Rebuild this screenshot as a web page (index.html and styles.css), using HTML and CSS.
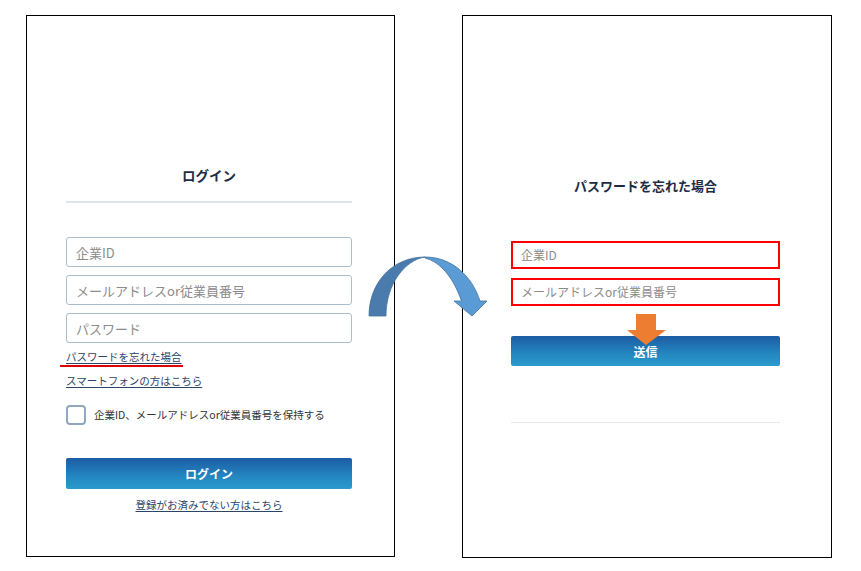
FILE: index.html
```html
<!DOCTYPE html>
<html lang="ja">
<head>
<meta charset="utf-8">
<title>ログイン</title>
<link rel="stylesheet" href="styles.css">
</head>
<body>
<div class="stage">
  <section class="panel panel-login">
    <h1 class="title">ログイン</h1>
    <div class="divider"></div>
    <input class="field" type="text" placeholder="企業ID">
    <input class="field" type="text" placeholder="メールアドレスor従業員番号">
    <input class="field" type="password" placeholder="パスワード">
    <div class="link-row first"><a class="link marked" href="#">パスワードを忘れた場合</a></div>
    <div class="link-row second"><a class="link" href="#">スマートフォンの方はこちら</a></div>
    <label class="keep">
      <span class="checkbox"></span>
      <span class="keep-text">企業ID、メールアドレスor従業員番号を保持する</span>
    </label>
    <button class="btn btn-login" type="button">ログイン</button>
    <div class="register"><a class="link" href="#">登録がお済みでない方はこちら</a></div>
  </section>

  <section class="panel panel-forgot">
    <h2 class="title small">パスワードを忘れた場合</h2>
    <input class="field red first" type="text" placeholder="企業ID">
    <input class="field red" type="text" placeholder="メールアドレスor従業員番号">
    <div class="send-wrap">
      <svg class="down-arrow" width="40" height="32" viewBox="0 0 40 32"><polygon points="9,0 29,0 29,16 39,16 19,31 0,16 9,16" fill="#ed7d31"/></svg>
      <button class="btn btn-send" type="button">送信</button>
    </div>
    <div class="divider light"></div>
  </section>

  <svg class="curve-arrow" width="130" height="70" viewBox="365 252 130 70">
    <path d="M369,316 C369,282 393,257 425,257 C405,260 386,284 386,316 Z" fill="#4a7bac" stroke="#41719c" stroke-width="0.8"/>
    <path d="M425,257 C452,257 472,276 480,301 L487,301 L472,316 L454,301 L461.5,301 C454,279 441,262 425,258 Z" fill="#5b9bd5" stroke="#41719c" stroke-width="0.8"/>
  </svg>
</div>
</body>
</html>
```

FILE: styles.css
```css
* { box-sizing: border-box; }
html, body { margin: 0; padding: 0; background: #ffffff; }
body {
  font-family: "Noto Sans CJK JP", "Noto Sans", sans-serif;
  color: #1d2c45;
}
.stage {
  position: relative;
  width: 861px;
  height: 571px;
  display: flex;
  align-items: flex-start;
  padding: 15px 0 0 26px;
  gap: 67px;
}
.panel {
  border: 1px solid #000;
  display: flex;
  flex-direction: column;
  align-items: stretch;
}
.panel-login {
  width: 369px;
  height: 542px;
  padding: 149px 42px 0 39px;
}
.panel-forgot {
  width: 370px;
  height: 543px;
  padding: 160px 51px 0 48px;
}
.title {
  margin: 0;
  font-size: 13.5px;
  line-height: 20px;
  font-weight: 700;
  text-align: center;
  color: #1d2c45;
}
.title.small { font-size: 13px; }
.divider {
  height: 2px;
  background: #dde6ee;
  margin-top: 16px;
}
.divider.light {
  height: 1px;
  background: #e6e8ea;
  margin-top: 56px;
}
.field {
  display: block;
  width: 100%;
  height: 30px;
  border: 1px solid #a9bfd0;
  border-radius: 3px;
  padding: 0 9px;
  font-family: "Noto Sans CJK JP", "Noto Sans", sans-serif;
  font-size: 13px;
  color: #333;
  background: #fff;
  outline: none;
  margin-top: 8px;
}
.divider + .field { margin-top: 34px; }
.field::placeholder { color: #8c8c8c; }
.field.red {
  height: 28px;
  border: 2px solid #ff0000;
  border-radius: 0;
  font-size: 12px;
  padding: 0 8px 1px;
  margin-top: 9px;
}
.field.red.first { margin-top: 45px; }
.link-row {
  font-size: 10.5px;
  line-height: 16px;
}
.link-row.first { margin-top: 6px; }
.link-row.second { margin-top: 8px; }
.link {
  color: #2a4566;
  text-decoration: underline;
  text-underline-offset: 2px;
}
.marked { position: relative; }
.marked::after {
  content: "";
  position: absolute;
  left: -6px;
  right: -1px;
  bottom: -3px;
  height: 2px;
  background: #e00000;
}
.keep {
  display: flex;
  align-items: center;
  gap: 8px;
  margin-top: 16px;
  font-size: 10.5px;
  line-height: 20px;
  color: #333;
}
.checkbox {
  width: 20px;
  height: 20px;
  border: 2px solid #8fa8bf;
  border-radius: 4px;
  background: #fff;
  flex: none;
}
.btn {
  display: block;
  width: 100%;
  border: none;
  border-radius: 2px;
  background: linear-gradient(to bottom, #1c5ca5 0%, #2487c0 60%, #2a9bcc 100%);
  color: #fff;
  font-family: "Noto Sans CJK JP", "Noto Sans", sans-serif;
  font-size: 12px;
  font-weight: 700;
  padding: 0;
}
.btn-login {
  height: 31px;
  margin-top: 33px;
}
.register {
  margin-top: 8px;
  text-align: center;
  font-size: 10.5px;
  line-height: 16px;
}
.send-wrap {
  position: relative;
  margin-top: 30px;
}
.btn-send { height: 30px; }
.down-arrow {
  position: absolute;
  left: 116px;
  top: -22px;
  z-index: 2;
}
.curve-arrow {
  position: absolute;
  left: 365px;
  top: 252px;
  pointer-events: none;
}
```
